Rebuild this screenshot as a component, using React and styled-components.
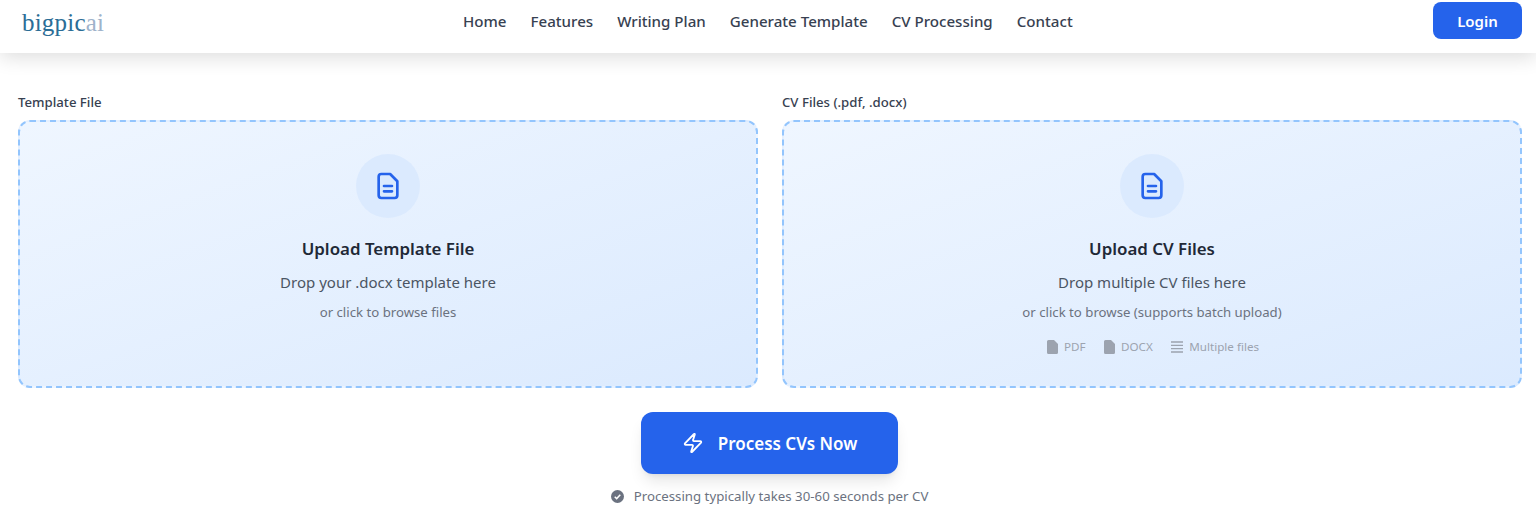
import React from "react";
import styled, { createGlobalStyle } from "styled-components";
import { Zap } from "lucide-react";

const Global = createGlobalStyle`
  html, body {
    margin: 0;
    padding: 0;
    background: #fff;
    overflow: hidden;
    font-family: "Noto Sans", "Open Sans", sans-serif;
  }
  * { box-sizing: border-box; }
`;

const Header = styled.header`
  height: 53px;
  padding: 2px 14px 0 22px;
  display: flex;
  align-items: flex-start;
  justify-content: space-between;
  background: #fff;
  box-shadow: 0 4px 20px rgba(0, 0, 0, 0.14);
  position: relative;
`;

const Logo = styled.div`
  font-family: "Liberation Serif", serif;
  font-size: 25px;
  line-height: 37px;
  margin-top: 2px;
  width: 160px;
  color: #2b6d96;
  letter-spacing: 0.2px;
  span { color: #9fb3cb; }
`;

const Nav = styled.nav`
  display: flex;
  gap: 24px;
  margin-left: 281px;
  margin-right: auto;
`;

const NavLink = styled.a`
  font-size: 15.12px;
  font-weight: 500;
  line-height: 39px;
  color: #374151;
`;

const LoginButton = styled.button`
  width: 89px;
  height: 37px;
  border: 0;
  border-radius: 8px;
  background: #2563eb;
  color: #fff;
  font: 600 15px "Noto Sans", sans-serif;
`;

const Main = styled.main`
  padding: 40px 15px 0 18px;
`;

const Columns = styled.div`
  display: grid;
  grid-template-columns: 740px 740px;
  gap: 24px;
`;

const Label = styled.label`
  display: block;
  font-size: 13.2px;
  font-weight: 500;
  line-height: 18px;
  margin-bottom: 9px;
  color: #374151;
`;

const DropZone = styled.div`
  height: 268px;
  padding-top: 32px;
  border: 2px dashed #93c5fd;
  border-radius: 12px;
  background: linear-gradient(to bottom right, #eff6ff, #dbeafe);
  display: flex;
  flex-direction: column;
  align-items: center;
`;

const IconCircle = styled.div`
  width: 64px;
  height: 64px;
  border-radius: 50%;
  background: #dbeafe;
  display: flex;
  align-items: center;
  justify-content: center;
  margin-bottom: 17px;
`;

const Title = styled.h3`
  margin: 0 0 7px;
  font-size: 16.9px;
  font-weight: 600;
  line-height: 28px;
  color: #1f2937;
`;

const Subtitle = styled.p`
  margin: 0 0 8px;
  font-size: 15px;
  line-height: 24px;
  color: #4b5563;
`;

const Hint = styled.p`
  margin: 0;
  font-size: 13.2px;
  line-height: 20px;
  color: #6b7280;
`;

const Formats = styled.div`
  display: flex;
  gap: 18.5px;
  margin-top: 17px;
  padding-left: 2px;
`;

const Format = styled.span`
  display: flex;
  align-items: center;
  gap: 6px;
  font-size: 11.65px;
  line-height: 16px;
  color: #9ca3af;
`;

const Actions = styled.div`
  display: flex;
  flex-direction: column;
  align-items: center;
  margin-top: 24px;
`;

const ProcessButton = styled.button`
  width: 257px;
  height: 62px;
  border: 0;
  border-radius: 12px;
  background: #2563eb;
  color: #fff;
  font: 600 17px "Noto Sans", sans-serif;
  display: flex;
  align-items: center;
  justify-content: center;
  gap: 14px;
  box-shadow: 0 10px 15px -3px rgba(0, 0, 0, 0.1), 0 4px 6px -4px rgba(0, 0, 0, 0.1);
`;

const Note = styled.p`
  margin: 12px 0 0;
  display: flex;
  align-items: center;
  gap: 10px;
  font-size: 13.25px;
  line-height: 20px;
  color: #6b7280;
`;

const FileIcon = () => (
  <svg width="32" height="32" viewBox="0 0 24 24" fill="none" stroke="#2563eb" strokeWidth="2" strokeLinecap="round" strokeLinejoin="round">
    <path d="M7 3h6.6L19 8.4V19a2 2 0 0 1-2 2H7a2 2 0 0 1-2-2V5a2 2 0 0 1 2-2z" />
    <path d="M9 12h6M9 16h6" />
  </svg>
);

const SmallFile = () => (
  <svg width="11" height="14" viewBox="0 0 11 14" fill="#9ca3af">
    <path d="M1.5 0H7l4 4v8.5a1.5 1.5 0 0 1-1.5 1.5h-8A1.5 1.5 0 0 1 0 12.5v-11A1.5 1.5 0 0 1 1.5 0z" />
  </svg>
);

const Lines = () => (
  <svg width="12" height="12" viewBox="0 0 12 12" stroke="#9ca3af" strokeWidth="1.3">
    <path d="M0 1h12M0 4.3h12M0 7.6h12M0 11h12" />
  </svg>
);

const CheckBadge = () => (
  <svg width="13" height="13" viewBox="0 0 14 14">
    <circle cx="7" cy="7" r="7" fill="#6b7280" />
    <path d="M4 7.3l2.1 2L10 5.2" fill="none" stroke="#fff" strokeWidth="1.6" />
  </svg>
);

const links = ["Home", "Features", "Writing Plan", "Generate Template", "CV Processing", "Contact"];

export default function App() {
  return (
    <>
      <Global />
      <Header>
        <Logo>
          bigpic<span>ai</span>
        </Logo>
        <Nav>
          {links.map((link) => (
            <NavLink key={link}>{link}</NavLink>
          ))}
        </Nav>
        <LoginButton>Login</LoginButton>
      </Header>
      <Main>
        <Columns>
          <div>
            <Label>Template File</Label>
            <DropZone>
              <IconCircle>
                <FileIcon />
              </IconCircle>
              <Title>Upload Template File</Title>
              <Subtitle>Drop your .docx template here</Subtitle>
              <Hint>or click to browse files</Hint>
            </DropZone>
          </div>
          <div>
            <Label>CV Files (.pdf, .docx)</Label>
            <DropZone>
              <IconCircle>
                <FileIcon />
              </IconCircle>
              <Title>Upload CV Files</Title>
              <Subtitle>Drop multiple CV files here</Subtitle>
              <Hint>or click to browse (supports batch upload)</Hint>
              <Formats>
                <Format>
                  <SmallFile />
                  PDF
                </Format>
                <Format>
                  <SmallFile />
                  DOCX
                </Format>
                <Format>
                  <Lines />
                  Multiple files
                </Format>
              </Formats>
            </DropZone>
          </div>
        </Columns>
        <Actions>
          <ProcessButton>
            <Zap size={22} />
            Process CVs Now
          </ProcessButton>
          <Note>
            <CheckBadge />
            Processing typically takes 30-60 seconds per CV
          </Note>
        </Actions>
      </Main>
    </>
  );
}
